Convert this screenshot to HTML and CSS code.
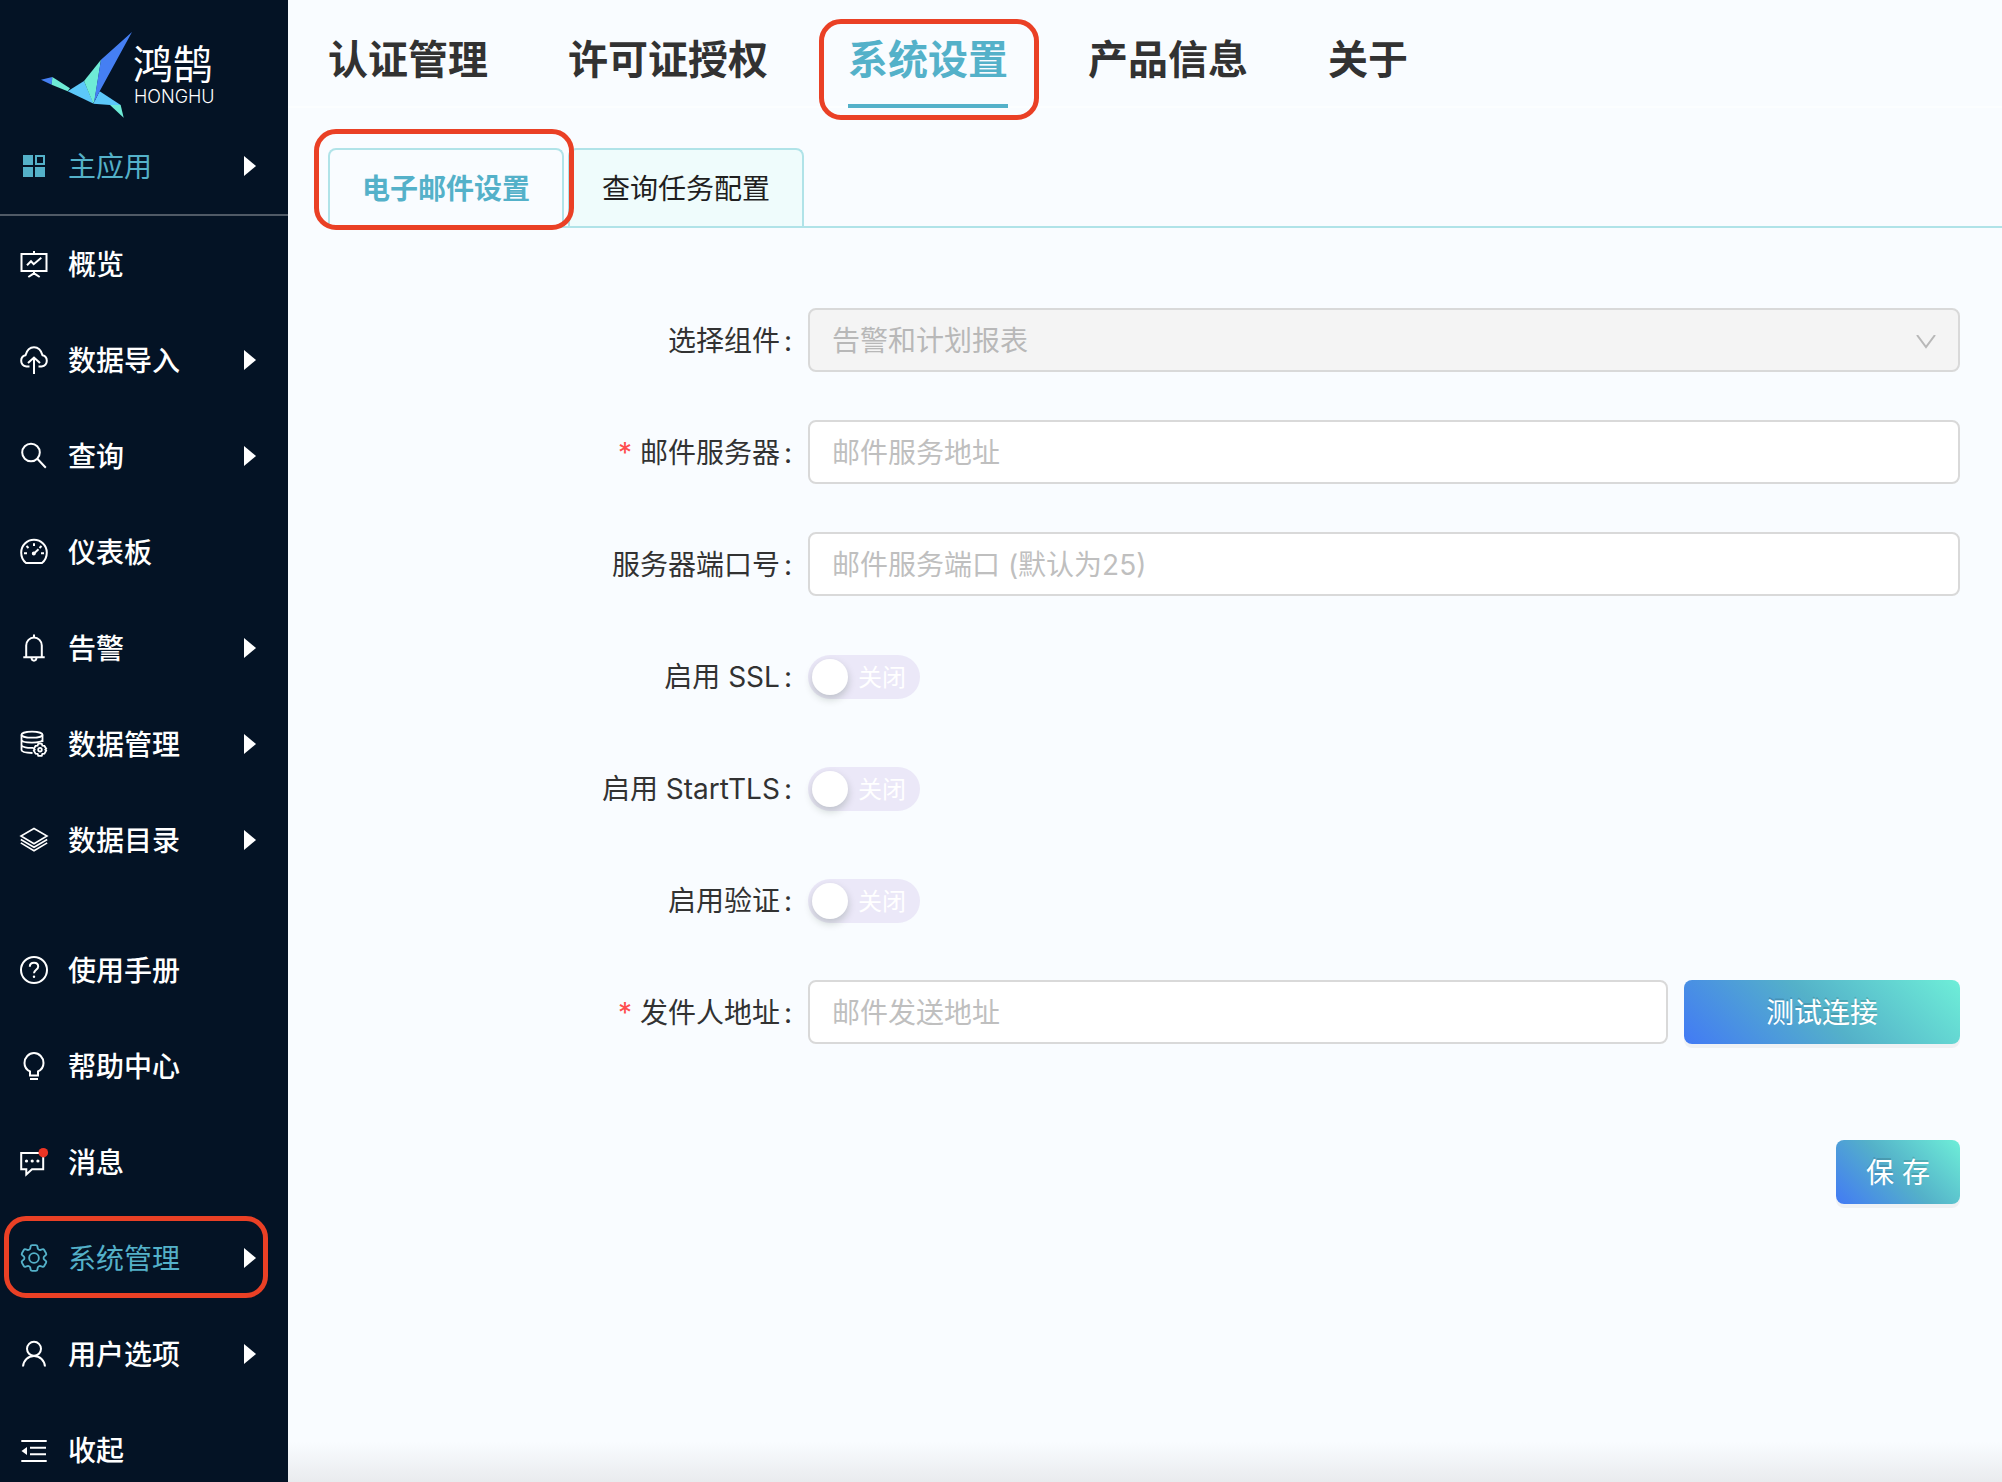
FILE: index.html
```html
<!DOCTYPE html>
<html lang="zh-CN">
<head>
<meta charset="utf-8">
<title>鸿鹄 - 系统设置</title>
<link rel="stylesheet" href="styles.css">
</head>
<body>
<div class="app">
  <aside class="sidebar">
    <div class="logo">
      <svg class="logo-bird" viewBox="0 0 276 258" aria-hidden="true">
        <path fill="#457ff3" d="M0 143 34 135 32 158Z"/>
        <path fill="#6eebd6" d="M34 135 87 169 80 178 32 158Z"/>
        <path fill="#5cc8fa" d="M80 178 129 147 158 215Z"/>
        <path fill="#5cc8fa" d="M157 215 176 178 239 219 207 219Z"/>
        <path fill="#6eebd6" d="M129 147 180 83 160 209 156 213Z"/>
        <path fill="#457ff3" d="M273 0 180 83 159 211 176 178Z"/>
        <path fill="#6eebd6" d="M207 219 239 219 248 257Z"/>
      </svg>
      <div class="logo-text"><span class="logo-cn">鸿鹄</span><span class="logo-en">HONGHU</span></div>
    </div>
    <a class="nav-item nav-app" href="#">
      <svg class="icon" viewBox="0 0 28 28"><path fill="currentColor" stroke="none" d="M3 3h10v10H3zM3 15h10v10H3zM15 15h10v10H15z"/><path d="M16 4h8v8h-8z"/></svg>
      <span class="nav-label">主应用</span><span class="arrow"></span>
    </a>
    <nav class="nav-group">
      <a class="nav-item" href="#">
        <svg class="icon" viewBox="0 0 28 28"><path d="M1.500 4h25v17h-25zM14 1v3M14 21v2.500M8.300 27l5.700-3.700 5.700 3.700M7 15.300l4-4 2.700 2.900 7.600-6.500"/></svg>
        <span class="nav-label">概览</span>
      </a>
      <a class="nav-item" href="#">
        <svg class="icon" viewBox="0 0 28 28"><path d="M9.500 20.500H6.500C3.500 20 1.200 17.800 1.200 14.700 1.200 12 3 9.800 5.500 9.200 6.800 4.500 10 1.200 14 1.200s7.200 3.300 8.500 8c2.500.6 4.300 2.800 4.300 5.500 0 3.100-2.300 5.300-5.300 5.800h-3M14 28V12M8 17l6-5.500 6 5.500"/></svg>
        <span class="nav-label">数据导入</span><span class="arrow"></span>
      </a>
      <a class="nav-item" href="#">
        <svg class="icon" viewBox="0 0 28 28"><circle cx="11" cy="10.500" r="8.800"/><path d="M17.300 16.800l8.500 9"/></svg>
        <span class="nav-label">查询</span><span class="arrow"></span>
      </a>
      <a class="nav-item" href="#">
        <svg class="icon" viewBox="0 0 28 28"><path d="M6 25C3 22.700 1.200 19 1.200 14.600a12.800 12.800 0 0 1 25.600 0C26.800 19 25 22.700 22 25ZM14 5.300V8M4 15.200h3M21 15.200h3M6.500 8l2 2M21.500 8l-2 2M14 15.500l4.500-4.200"/><circle cx="13.800" cy="15.600" r="1" fill="currentColor"/></svg>
        <span class="nav-label">仪表板</span>
      </a>
      <a class="nav-item" href="#">
        <svg class="icon" viewBox="0 0 28 28"><path d="M6.200 23V11.500a7.800 8 0 0 1 15.600 0V23M3.300 23.200h21.400M14 .6v3M11.500 24c.2 1.800 1.200 2.700 2.500 2.700s2.300-.9 2.500-2.700"/></svg>
        <span class="nav-label">告警</span><span class="arrow"></span>
      </a>
      <a class="nav-item" href="#">
        <svg class="icon" viewBox="0 0 28 28"><g stroke-width="1.800"><ellipse cx="12" cy="4.700" rx="10.500" ry="3"/><path d="M1.500 4.700V20c0 1.700 5 2.800 11 3M22.500 4.700V12M1.500 9.800c0 3.800 21 3.800 21 0M1.500 15c0 2 6 3.200 12 2.800"/><circle cx="20" cy="19.700" r="1.800"/><path d="m18.300 13.700 3.400 0 .7 1.900 2 .3 1.800 2.800-.9 1 .9 1-1.800 3-2 .2-.7 2h-3.400l-.7-2-2-.2-1.800-3 .9-1-.9-1 1.800-2.800 2-.3Z"/></g></svg>
        <span class="nav-label">数据管理</span><span class="arrow"></span>
      </a>
      <a class="nav-item" href="#">
        <svg class="icon" viewBox="0 0 28 28"><path stroke-width="1.600" d="M14 2.500 27 10 14 17.700 1 10ZM.8 13.500 14 21.200l13.200-7.700M.8 16.900 14 24.800l13.200-7.900"/></svg>
        <span class="nav-label">数据目录</span><span class="arrow"></span>
      </a>
    </nav>
    <nav class="nav-group nav-group-tools">
      <a class="nav-item" href="#">
        <svg class="icon" viewBox="0 0 28 28"><circle cx="14" cy="14" r="13"/><path d="M9.800 10.800c0-2.500 1.800-4 4.200-4s4.200 1.500 4.200 3.700c0 3.300-4.200 3.200-4.200 6.800"/><circle cx="14" cy="20.800" r="1.200" fill="currentColor" stroke="none"/></svg>
        <span class="nav-label">使用手册</span>
      </a>
      <a class="nav-item" href="#">
        <svg class="icon" viewBox="0 0 28 28"><path d="M10 23.500v-4.200c-3.300-1.500-5.500-4.700-5.500-8.400a9.500 9.800 0 0 1 19 0c0 3.700-2.200 6.900-5.500 8.400v4.200ZM10 27h8"/></svg>
        <span class="nav-label">帮助中心</span>
      </a>
      <a class="nav-item" href="#">
        <svg class="icon" viewBox="0 0 28 28"><path d="M1.200 5h22v16.300H12L6.300 26.500v-5.200H1.200Z"/><g fill="currentColor" stroke="none"><circle cx="6.500" cy="13" r="1.600"/><circle cx="12.200" cy="13" r="1.600"/><circle cx="17.900" cy="13" r="1.600"/></g><circle cx="23.300" cy="4.700" r="4.800" fill="#ed3524" stroke="none"/></svg>
        <span class="nav-label">消息</span>
      </a>
      <a class="nav-item nav-item-active" href="#" aria-current="page">
        <svg class="icon" viewBox="2.200 2.200 19.600 19.600"><g stroke-width="1.300"><path d="M9.594 3.940c.09-.542.56-.94 1.110-.94h2.593c.55 0 1.020.398 1.110.94l.213 1.281c.063.374.313.686.645.87.074.04.147.083.22.127.325.196.72.257 1.075.124l1.217-.456a1.125 1.125 0 0 1 1.370.49l1.296 2.247a1.125 1.125 0 0 1-.26 1.431l-1.003.827c-.293.241-.438.613-.43.992a7.723 7.723 0 0 1 0 .255c-.008.378.137.75.43.991l1.004.827c.424.35.534.955.26 1.430l-1.298 2.247a1.125 1.125 0 0 1-1.369.491l-1.217-.456c-.355-.133-.75-.072-1.076.124a6.470 6.470 0 0 1-.22.128c-.331.183-.581.495-.644.869l-.213 1.281c-.09.543-.56.94-1.110.94h-2.594c-.55 0-1.019-.398-1.110-.94l-.213-1.281c-.062-.374-.312-.686-.644-.87a6.520 6.520 0 0 1-.22-.127c-.325-.196-.72-.257-1.076-.124l-1.217.456a1.125 1.125 0 0 1-1.369-.49l-1.297-2.247a1.125 1.125 0 0 1 .26-1.431l1.004-.827c.292-.24.437-.613.43-.991a6.932 6.932 0 0 1 0-.255c.007-.38-.138-.751-.43-.992l-1.004-.827a1.125 1.125 0 0 1-.26-1.430l1.297-2.247a1.125 1.125 0 0 1 1.370-.491l1.216.456c.356.133.751.072 1.076-.124.072-.044.146-.086.22-.128.332-.183.582-.495.644-.869l.214-1.280Z"/><circle cx="12" cy="12" r="3.400"/></g></svg>
        <span class="nav-label">系统管理</span><span class="arrow"></span>
      </a>
      <a class="nav-item" href="#">
        <svg class="icon" viewBox="0 0 28 28"><circle cx="14" cy="8.800" r="7"/><path d="M3 26.500c.5-6 5-10.500 11-10.500s10.500 4.500 11 10.500"/></svg>
        <span class="nav-label">用户选项</span><span class="arrow"></span>
      </a>
      <a class="nav-item" href="#">
        <svg class="icon" viewBox="0 0 28 28"><path d="M1.300 5h25.400M10 11.800h16M10 18.200h16M1.300 25h25.400"/><path fill="currentColor" stroke="none" d="M1.500 15 7 11v8Z"/></svg>
        <span class="nav-label">收起</span>
      </a>
    </nav>
  </aside>

  <main class="main">
    <nav class="top-nav">
      <a class="top-link" href="#">认证管理</a>
      <a class="top-link" href="#">许可证授权</a>
      <a class="top-link top-link-active" href="#" aria-current="page">系统设置</a>
      <a class="top-link" href="#">产品信息</a>
      <a class="top-link" href="#">关于</a>
    </nav>
    <div class="tabs" role="tablist">
      <button class="tab tab-active" type="button" role="tab" aria-selected="true">电子邮件设置</button>
      <button class="tab" type="button" role="tab" aria-selected="false">查询任务配置</button>
    </div>
    <form class="form">
      <div class="row">
        <label class="row-label" for="component">选择组件</label>
        <div class="select-wrap">
          <select class="field" id="component" disabled><option>告警和计划报表</option></select>
          <svg class="chevron" viewBox="0 0 20 14"><path d="M1 0l9 12 9-12"/></svg>
        </div>
      </div>
      <div class="row">
        <label class="row-label required" for="server">邮件服务器</label>
        <input class="field" id="server" type="text" placeholder="邮件服务地址">
      </div>
      <div class="row">
        <label class="row-label" for="port">服务器端口号</label>
        <input class="field" id="port" type="text" placeholder="邮件服务端口 (默认为25)">
      </div>
      <div class="row">
        <label class="row-label" for="ssl">启用 SSL</label>
        <div class="switch"><input id="ssl" type="checkbox" role="switch"><span class="switch-text">关闭</span></div>
      </div>
      <div class="row">
        <label class="row-label" for="tls">启用 StartTLS</label>
        <div class="switch"><input id="tls" type="checkbox" role="switch"><span class="switch-text">关闭</span></div>
      </div>
      <div class="row">
        <label class="row-label" for="auth">启用验证</label>
        <div class="switch"><input id="auth" type="checkbox" role="switch"><span class="switch-text">关闭</span></div>
      </div>
      <div class="row">
        <label class="row-label required" for="sender">发件人地址</label>
        <div class="sender">
          <input class="field" id="sender" type="text" placeholder="邮件发送地址">
          <button class="btn btn-test" type="button">测试连接</button>
        </div>
      </div>
      <div class="actions"><button class="btn btn-save" type="submit">保 存</button></div>
    </form>
  </main>
</div>
</body>
</html>
```

FILE: styles.css
```css
:root {
  --accent: #54b1c9;
  --line: #b0e3e8;
  --mark: #ea4025;
  --page: #f9fcff;
}

* {
  box-sizing: border-box;
}

body {
  margin: 0;
  font-family: Inter, "Noto Sans CJK SC", sans-serif;
  font-size: 28px;
  line-height: 44px;
  color: #323232;
  background: var(--page);
}

button,
input,
select {
  font: inherit;
}

a {
  color: inherit;
  text-decoration: none;
}

.app {
  display: flex;
  height: 100vh;
}

/* Sidebar */
.sidebar {
  flex: 0 0 288px;
  overflow: hidden;
  color: #fff;
  background: #041325;
}

.logo {
  display: flex;
  height: 118px;
  padding: 32px 0 0 41px;
}

.logo-bird {
  width: 92px;
  height: 86px;
}

.logo-text {
  display: flex;
  flex-direction: column;
  padding-top: 12px;
}

.logo-cn {
  font-size: 40px;
  line-height: 42px;
}

.logo-en {
  padding-left: 1px;
  font-size: 18px;
  font-weight: 300;
  line-height: 22px;
}

.nav-item {
  position: relative;
  display: flex;
  align-items: center;
  gap: 20px;
  height: 96px;
  padding: 0 32px 0 20px;
  font-weight: 500;
}

.nav-app {
  height: 98px;
  font-weight: 400;
  color: var(--accent);
  border-bottom: 2px solid #505a66;
}

.nav-item-active {
  font-weight: 400;
  color: var(--accent);
}

.nav-item-active::after {
  content: "";
  position: absolute;
  inset: 6px 20px 8px 4px;
  border: 5px solid var(--mark);
  border-radius: 22px;
}

.nav-label {
  padding-top: 2px;
}

.nav-group-tools {
  margin-top: 34px;
}

.icon {
  width: 28px;
  height: 28px;
  overflow: visible;
  fill: none;
  stroke: currentColor;
  stroke-width: 2;
}

.arrow {
  width: 12px;
  height: 20px;
  margin-left: auto;
  background: #fff;
  clip-path: polygon(0 0, 100% 50%, 0 100%);
}

/* Main area */
.main {
  flex: 1;
  min-width: 0;
  background: linear-gradient(to top, #e9ebee, var(--page) 40px);
}

.top-nav {
  display: flex;
  gap: 80px;
  height: 108px;
  padding: 0 40px;
  border-bottom: 2px solid #fcfeff;
}

.top-link {
  position: relative;
  height: 108px;
  padding-top: 30px;
  font-size: 40px;
  font-weight: 700;
  line-height: 60px;
  white-space: nowrap;
}

.top-link-active {
  color: var(--accent);
  border-bottom: 4px solid var(--accent);
}

.top-link-active::after {
  content: "";
  position: absolute;
  inset: 19px -31px -16px -29px;
  border: 5px solid var(--mark);
  border-radius: 22px;
}

.tabs {
  display: flex;
  gap: 4px;
  margin: 40px 0 0 40px;
  border-bottom: 2px solid var(--line);
}

.tab {
  position: relative;
  height: 78px;
  padding: 2px 32px 0;
  color: #1f1f1f;
  background: #effcfc;
  border: 2px solid var(--line);
  border-bottom: 0;
  border-radius: 8px 8px 0 0;
}

.tab-active {
  z-index: 1;
  font-weight: 600;
  color: var(--accent);
  background: var(--page);
}

.tab-active::after {
  content: "";
  position: absolute;
  inset: -21px -12px -4px -16px;
  border: 5px solid var(--mark);
  border-radius: 22px;
}

/* Form */
.form {
  display: flex;
  flex-direction: column;
  gap: 48px;
  padding: 80px 42px 0 40px;
}

.row {
  display: grid;
  grid-template-columns: 464px minmax(0, 1fr);
  column-gap: 16px;
  align-items: center;
  min-height: 64px;
}

.row-label {
  padding-top: 2px;
  text-align: right;
}

.row-label::after {
  content: ":";
  margin-left: 4px;
}

.required::before {
  content: "*";
  margin-right: 8px;
  color: #ff4d4f;
}

.field {
  width: 100%;
  min-width: 0;
  height: 64px;
  padding: 2px 22px 0;
  color: #323232;
  background: #fff;
  border: 2px solid #d9d9d9;
  border-radius: 8px;
  appearance: none;
}

.field::placeholder {
  color: #bfbfbf;
  opacity: 1;
}

.field:disabled {
  color: #b8b8b8;
  background: #f4f4f4;
  opacity: 1;
}

.select-wrap {
  position: relative;
}

.chevron {
  position: absolute;
  top: 27px;
  right: 24px;
  width: 20px;
  height: 14px;
  fill: none;
  stroke: #b8b8b8;
  stroke-width: 2;
  pointer-events: none;
}

.switch {
  display: grid;
  width: 112px;
  height: 44px;
  margin-top: 2px;
}

.switch input {
  grid-area: 1 / 1;
  width: 112px;
  height: 44px;
  margin: 0;
  padding: 4px;
  background: #ebe8f8;
  border-radius: 22px;
  appearance: none;
}

.switch input::before {
  content: "";
  display: block;
  width: 36px;
  height: 36px;
  background: #fff;
  border-radius: 50%;
  box-shadow: 0 4px 8px rgba(0, 35, 11, 0.2);
}

.switch-text {
  grid-area: 1 / 1;
  padding: 1px 0 0 50px;
  font-size: 24px;
  color: #fff;
  pointer-events: none;
}

.sender {
  display: grid;
  grid-template-columns: minmax(0, 1fr) 276px;
  gap: 16px;
}

.btn {
  height: 64px;
  padding: 2px 0 0;
  color: #fff;
  background: linear-gradient(45deg, #427af5, #54b1c9 50%, #6eeed8);
  border: 0;
  border-radius: 8px;
  box-shadow: 0 4px 0 rgba(0, 0, 0, 0.043);
  text-shadow: 0 -2px 0 rgba(0, 0, 0, 0.12);
}

.actions {
  display: flex;
  justify-content: flex-end;
  padding-top: 48px;
}

.btn-save {
  width: 124px;
}
```
